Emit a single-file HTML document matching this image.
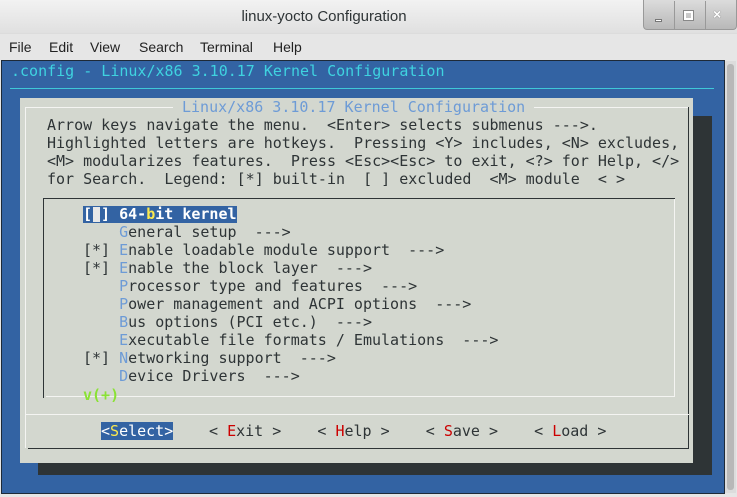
<!DOCTYPE html>
<html><head><meta charset="utf-8"><style>
*{margin:0;padding:0;box-sizing:border-box}
body{width:737px;height:497px;overflow:hidden;background:#e6e6e6;font-family:"Liberation Sans",sans-serif;position:relative}
.a{position:absolute}
.m{font-family:"DejaVu Sans Mono","Liberation Mono",monospace;font-size:15px;line-height:18px;white-space:pre;position:absolute}
.h{color:#6d9bd6}
.r{color:#c00}
.y{color:#fce94f}
</style></head><body>
<div class="a" style="left:0;top:0;width:737px;height:34px;background:linear-gradient(#f2f2f2,#e0e0e0);border-bottom:1px solid #dcdcdc"></div>
<div class="a" style="left:0;top:8px;width:648px;text-align:center;font-size:15px;color:#2e3436">linux-yocto Configuration</div>
<div class="a" style="left:643px;top:0;width:94px;height:30px;background:linear-gradient(#dcdcdc,#b8b8b8);border:1px solid #999;border-top:none;border-radius:0 0 4px 4px"></div>
<div class="a" style="left:674px;top:1px;width:1px;height:28px;background:#999"></div>
<div class="a" style="left:705px;top:1px;width:1px;height:28px;background:#999"></div>
<div class="a" style="left:655px;top:19px;width:7px;height:3px;background:#fff;border:1px solid #777"></div>
<div class="a" style="left:684px;top:11px;width:9px;height:9px;border:2px solid #fff;outline:1px solid #888"></div>
<div class="a" style="left:713px;top:6px;font-size:14px;color:#fff;font-weight:bold;text-shadow:0 0 1px #555">×</div>
<div class="a" style="top:39px;left:9px;font-size:14px;color:#222">File</div>
<div class="a" style="top:39px;left:49px;font-size:14px;color:#222">Edit</div>
<div class="a" style="top:39px;left:90px;font-size:14px;color:#222">View</div>
<div class="a" style="top:39px;left:139px;font-size:14px;color:#222">Search</div>
<div class="a" style="top:39px;left:200px;font-size:14px;color:#222">Terminal</div>
<div class="a" style="top:39px;left:273px;font-size:14px;color:#222">Help</div>

<div class="a" style="left:1px;top:60px;width:724px;height:434px;background:#3363a3;border:1px solid #1e2a38"></div>
<div class="a" style="left:725px;top:61px;width:11px;height:432px;background:#dcdcdc"></div>
<div class="a" style="left:727px;top:64px;width:7px;height:426px;background:#b8b8b8;border-radius:3px"></div>

<div class="m" style="left:11px;top:62px;color:#3fd3e0">.config - Linux/x86 3.10.17 Kernel Configuration</div>
<div class="a" style="left:10px;top:88px;width:704px;height:1px;background:#3fc8d8"></div>

<div class="a" style="left:38px;top:116px;width:674px;height:359px;background:#2e3436"></div>
<div class="a" style="left:20px;top:98px;width:673px;height:365px;background:#d3d7cf"></div>
<div class="a" style="left:25px;top:107px;width:664px;height:1px;background:#f4f4f2"></div>
<div class="a" style="left:25px;top:107px;width:1px;height:341px;background:#f4f4f2"></div>
<div class="a" style="left:28px;top:448px;width:661px;height:1px;background:#2e3436"></div>
<div class="a" style="left:688px;top:107px;width:1px;height:342px;background:#2e3436"></div>
<div class="m h" style="left:173px;top:98px;background:#d3d7cf;padding:0 9px">Linux/x86 3.10.17 Kernel Configuration</div>
<div class="m" style="left:47px;top:116px;color:#2e3436">Arrow keys navigate the menu.  &lt;Enter&gt; selects submenus ---&gt;.
Highlighted letters are hotkeys.  Pressing &lt;Y&gt; includes, &lt;N&gt; excludes,
&lt;M&gt; modularizes features.  Press &lt;Esc&gt;&lt;Esc&gt; to exit, &lt;?&gt; for Help, &lt;/&gt;
for Search.  Legend: [*] built-in  [ ] excluded  &lt;M&gt; module  &lt; &gt;</div>

<div class="a" style="left:43px;top:198px;width:632px;height:1px;background:#2e3436"></div>
<div class="a" style="left:43px;top:198px;width:1px;height:200px;background:#2e3436"></div>
<div class="a" style="left:46px;top:396px;width:629px;height:1px;background:#f4f4f2"></div>
<div class="a" style="left:674px;top:199px;width:1px;height:198px;background:#f4f4f2"></div>

<div class="a" style="left:83px;top:206px;width:154px;height:17px;background:#3363a3"></div>
<div class="a" style="left:93px;top:207px;width:7px;height:15px;background:#e8e8e8"></div>
<div class="m" style="left:83px;top:205px;color:#fff;font-weight:bold">[ ] 64-<span class="y">b</span>it kernel</div>
<div class="m" style="left:83px;top:223px;color:#2e3436">    <span class="h">G</span>eneral setup  ---&gt;
[*] <span class="h">E</span>nable loadable module support  ---&gt;
[*] <span class="h">E</span>nable the block layer  ---&gt;
    <span class="h">P</span>rocessor type and features  ---&gt;
    <span class="h">P</span>ower management and ACPI options  ---&gt;
    <span class="h">B</span>us options (PCI etc.)  ---&gt;
    <span class="h">E</span>xecutable file formats / Emulations  ---&gt;
[*] <span class="h">N</span>etworking support  ---&gt;
    <span class="h">D</span>evice Drivers  ---&gt;</div>
<div class="m" style="left:83px;top:386px;color:#8ae234;font-weight:bold">v(+)</div>

<div class="a" style="left:25px;top:414px;width:664px;height:1px;background:#f4f4f2"></div>
<div class="a" style="left:101px;top:422px;width:72px;height:18px;background:#3363a3"></div>
<div class="m" style="left:101px;top:422px;color:#fff">&lt;<span class="y">S</span>elect&gt;</div>
<div class="m" style="left:209px;top:422px;color:#2e3436">&lt; <span class="r">E</span>xit &gt;    &lt; <span class="r">H</span>elp &gt;    &lt; <span class="r">S</span>ave &gt;    &lt; <span class="r">L</span>oad &gt;</div>
</body></html>
